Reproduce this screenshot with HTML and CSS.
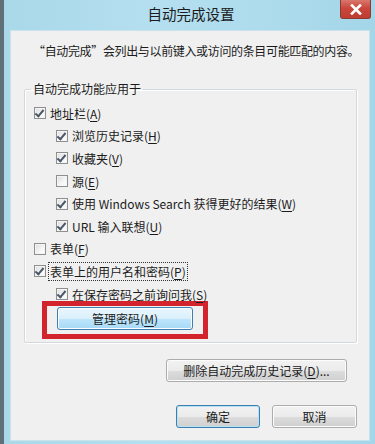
FILE: index.html
```html
<!DOCTYPE html>
<html lang="zh-CN">
<head>
<meta charset="utf-8">
<link rel="stylesheet" href="styles.css">
</head>
<body>
<div class="window">
  <div class="titlebar">
    <div class="title">自动完成设置</div>
    <div class="close"><svg width="14" height="11" viewBox="0 0 14 11"><path d="M3 1.5 L11 9.5 M11 1.5 L3 9.5" stroke="#fff" stroke-width="2.6" stroke-linecap="square"/></svg></div>
  </div>
  <div class="content">
    <p class="desc">“自动完成”会列出与以前键入或访问的条目可能匹配的内容。</p>
    <fieldset class="group">
      <legend>自动完成功能应用于</legend>
      <div class="row"><span class="cb on"></span><span>地址栏(<u>A</u>)</span></div>
      <div class="row sub"><span class="cb on"></span><span>浏览历史记录(<u>H</u>)</span></div>
      <div class="row sub"><span class="cb on"></span><span>收藏夹(<u>V</u>)</span></div>
      <div class="row sub"><span class="cb"></span><span>源(<u>E</u>)</span></div>
      <div class="row sub"><span class="cb on"></span><span>使用 Windows Search 获得更好的结果(<u>W</u>)</span></div>
      <div class="row sub"><span class="cb on"></span><span>URL 输入联想(<u>U</u>)</span></div>
      <div class="row"><span class="cb"></span><span>表单(<u>F</u>)</span></div>
      <div class="row"><span class="cb on"></span><span class="focus">表单上的用户名和密码(<u>P</u>)</span></div>
      <div class="row sub"><span class="cb on"></span><span>在保存密码之前询问我(<u>S</u>)</span></div>
      <div class="highlight"><button class="btn manage">管理密码(<u>M</u>)</button></div>
    </fieldset>
    <div class="actions">
      <button class="btn delete">删除自动完成历史记录(<u>D</u>)...</button>
    </div>
    <div class="footer">
      <button class="btn ok">确定</button>
      <button class="btn cancel">取消</button>
    </div>
  </div>
</div>
</body>
</html>
```
FILE: styles.css
```css
* { box-sizing: border-box; }
html, body { margin: 0; padding: 0; }
body {
  width: 375px;
  height: 444px;
  overflow: hidden;
  font-family: "Noto Sans CJK SC", "Noto Sans", sans-serif;
  font-size: 12px;
  color: #1b1b1b;
}
.window {
  width: 375px;
  height: 444px;
  display: flex;
  flex-direction: column;
  padding: 0 5px 3px 10px;
  background: linear-gradient(90deg, #a9d8e8 0%, #b4dff0 40%, #aedcec 70%, #a3d6e8 100%);
  box-shadow: inset 4px 0 0 #5f7078;
}
.titlebar {
  height: 30px;
  flex: none;
  display: flex;
  align-items: flex-start;
  padding-left: 32px;
  margin-right: -1px;
}
.title {
  flex: 1;
  text-align: center;
  font-size: 14.5px;
  line-height: 16px;
  padding-top: 6px;
  color: #1c1c1c;
}
.close {
  width: 31px;
  height: 19px;
  display: flex;
  align-items: center;
  justify-content: center;
  background: linear-gradient(180deg, #d9776c 0%, #c9473d 45%, #bf3c31 100%);
  border: 1px solid #8d3a33;
  border-top: none;
  border-radius: 0 0 3px 3px;
}
.content {
  flex: 1;
  background: #f0f0f0;
  border: 1px solid #c9e2ec;
  display: flex;
  flex-direction: column;
  padding: 0 12px 0 13px;
}
.desc {
  margin: 12px 0 0 9px;
  font-size: 12px;
  letter-spacing: -0.35px;
  line-height: 16px;
  white-space: nowrap;
}
.group {
  margin: 22px 0 0 0;
  padding: 5px 0 3px 0;
  border: 1px solid #d3d9dd;
  box-shadow: inset 1px 1px 0 #fff, 1px 1px 0 #fff;
  border-radius: 2px;
  min-width: 0;
}
.group legend {
  margin-left: 6px;
  padding: 0 2px;
  line-height: 16px;
  font-size: 12px;
}
.row {
  height: 22.6px;
  display: flex;
  align-items: center;
  gap: 4px;
  padding-left: 9px;
  white-space: nowrap;
}
.row.sub { padding-left: 31px; }
.cb {
  width: 12px;
  height: 12px;
  flex: none;
  border: 1px solid #8f8f8f;
  background: linear-gradient(135deg, #dcdcdc 0%, #f6f6f6 60%, #ffffff 100%);
  box-shadow: inset 0 0 0 1px #f4f4f4;
  position: relative;
}
.cb.on::after {
  content: "";
  position: absolute;
  left: 2px;
  top: 0px;
  width: 3px;
  height: 7px;
  border: solid #4a5868;
  border-width: 0 2px 2px 0;
  transform: rotate(40deg);
}
.focus {
  outline: 1px dotted #333;
  outline-offset: 0px;
  padding: 0 1px;
  margin-left: -1px;
}
u { text-decoration: underline; text-underline-offset: 2px; }
.highlight {
  width: 166px;
  height: 38px;
  margin: -4px 0 0 17px;
  border: 5px solid #d3232c;
  padding: 1px 10px 0 10px;
}
.btn {
  font-family: "Noto Sans CJK SC", "Noto Sans", sans-serif;
  font-size: 12px;
  color: #1b1b1b;
  height: 23px;
  padding: 0;
  border: 1px solid #acacac;
  border-radius: 3px;
  background: linear-gradient(180deg, #f2f2f2 0%, #ebebeb 50%, #dddddd 51%, #cfcfcf 100%);
  box-shadow: inset 0 0 0 1px #fcfcfc;
  line-height: 20px;
}
.manage {
  width: 136px;
  border-color: #3c7fb1;
  background: linear-gradient(180deg, #eaf6fd 0%, #d9f0fc 50%, #bee6fd 51%, #a7d9f5 100%);
}
.actions {
  display: flex;
  justify-content: flex-end;
  margin-top: 16px;
  padding-right: 10px;
}
.delete { width: 181px; }
.footer {
  display: flex;
  justify-content: flex-end;
  gap: 12px;
  margin-top: 23px;
}
.ok {
  width: 84px;
  border-color: #3c7fb1;
  box-shadow: inset 0 0 0 1px #b9e1f6;
}
.cancel { width: 85px; }
```
